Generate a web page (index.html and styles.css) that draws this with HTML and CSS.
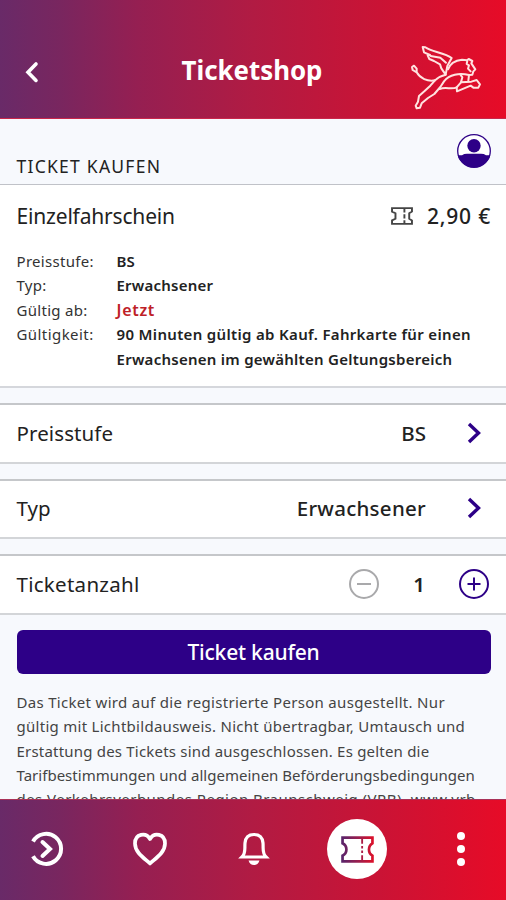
FILE: index.html
```html
<!DOCTYPE html>
<html lang="de">
<head>
<meta charset="utf-8">
<title>Ticketshop</title>
<link rel="stylesheet" href="styles.css">
</head>
<body>
<div class="app">
  <header class="top">
    <svg class="back" viewBox="0 0 16 24"><path d="M12 4 4 12.200l8 8.200" fill="none" stroke="#fff" stroke-width="3.600" stroke-linecap="round"/></svg>
    <h1><span>Ticketshop</span></h1>
    <svg class="lion" viewBox="0 0 300 255" fill="none" stroke="#ffe3e0" stroke-width="6" stroke-linejoin="round" stroke-linecap="round">
      <path d="M137 119 124 100 120 88 102 78 88 72 83 61 90 60 72 52 68 36 76 37C94 51 133 53 155 69L142 93 137 119"/>
      <path d="M92 63 121 68 138 83"/>
      <path d="M144 103C150 86 165 76 186 74L201 76 206 72 217 78 214 85 226 103 220 109 217 119 207 120 205 137"/>
      <path d="M202 77 200 87 207 91 204 101 212 109"/>
      <path d="M137 119C119 123 112 129 105 136C82 140 60 130 50 112L38 105 36 96 42 92 50 101V112"/>
      <path d="M105 136 91 152 73 169 57 183 54 200 47 212 50 220 60 218 65 205 84 189 103 177 121 156 132 139C148 119 177 113 207 120"/>
      <path d="M119 162C138 154 154 165 170 157L171 169 212 152 220 158 235 158 240 148 230 135 214 140 183 142 187 127 181 118"/>
      <path d="M170 157 183 142"/>
    </svg>
  </header>
  <main>
    <div class="subhead">
      <h2>TICKET KAUFEN</h2>
      <svg class="user" viewBox="0 0 36 36"><circle cx="18" cy="18" r="16.300" fill="#fff" stroke="#2d0087" stroke-width="1.300"/><circle cx="18" cy="12.800" r="6.700" fill="#2d0087"/><path d="M1.700 22.200H6Q8 20.800 11 20.800H25Q28 20.800 30 22.200H34.300A17 17 0 0 1 1.700 22.200Z" fill="#2d0087"/></svg>
    </div>
    <section class="ticket">
      <div class="title">
        <span class="name">Einzelfahrschein</span>
        <svg class="mini" viewBox="0 0 32 26" fill="none" stroke="#454545" stroke-width="2.800"><path d="M1.500 1.500H30.500V6.500L26.500 9V17L30.500 19.500V24.500H1.500V19.500L6.500 17V9L1.500 6.500Z"/><path d="M19.500 2V24" stroke-dasharray="6 2.500"/></svg>
        <span class="price">2,90 €</span>
      </div>
      <dl>
        <dt class="d1">Preisstufe:</dt><dd><span class="v1">BS</span></dd>
        <dt class="d2">Typ:</dt><dd><span class="v2">Erwachsener</span></dd>
        <dt class="d3">Gültig ab:</dt><dd class="now"><span class="v3">Jetzt</span></dd>
        <dt class="d4">Gültigkeit:</dt><dd><span class="v4">90 Minuten gültig ab Kauf. Fahrkarte für einen</span><br><span class="v5">Erwachsenen im gewählten Geltungsbereich</span></dd>
      </dl>
    </section>
    <section class="row">
      <span class="label l1">Preisstufe</span><span class="value w1">BS</span>
      <svg class="chev" viewBox="0 0 14 22"><path d="M2 2 11.500 11 2 20" fill="none" stroke="#2d0087" stroke-width="3.400"/></svg>
    </section>
    <section class="row">
      <span class="label l2">Typ</span><span class="value w2">Erwachsener</span>
      <svg class="chev" viewBox="0 0 14 22"><path d="M2 2 11.500 11 2 20" fill="none" stroke="#2d0087" stroke-width="3.400"/></svg>
    </section>
    <section class="row count">
      <span class="label l3">Ticketanzahl</span>
      <svg class="round" viewBox="0 0 32 32" fill="none" stroke="#a9a9ab" stroke-width="2"><circle cx="16" cy="16" r="14"/><path d="M9 16H23"/></svg>
      <span class="num">1</span>
      <svg class="round" viewBox="0 0 32 32" fill="none" stroke="#2d0087" stroke-width="2"><circle cx="16" cy="16" r="14"/><path d="M9.500 16H22.500M16 9.500V22.500"/></svg>
    </section>
    <button><span>Ticket kaufen</span></button>
    <p class="legal"><span class="p1">Das Ticket wird auf die registrierte Person ausgestellt. Nur</span><br><span class="p2">gültig mit Lichtbildausweis. Nicht übertragbar, Umtausch und</span><br><span class="p3">Erstattung des Tickets sind ausgeschlossen. Es gelten die</span><br><span class="p4">Tarifbestimmungen und allgemeinen Beförderungsbedingungen</span><br><span class="p5">des Verkehrsverbundes Region Braunschweig (VRB), www.vrb</span></p>
  </main>
  <nav>
    <svg class="icon" viewBox="0 0 36 36" fill="none" stroke="#fff" stroke-width="4"><path d="M5 10.500A15 15 0 1 1 5 25.200"/><path d="M14.500 11 22 18 14.500 25" stroke-linecap="round"/></svg>
    <svg class="icon" viewBox="0 0 36 36" fill="none" stroke="#fff" stroke-width="3.700" stroke-linejoin="round"><path d="M18 32.500C12 27 3 21.500 3 12.500C3 2.500 14 1 18 8C22 1 33 2.500 33 12.500C33 21.500 24 27 18 32.500Z"/></svg>
    <svg class="icon" viewBox="0 0 36 36" fill="none" stroke="#fff" stroke-width="3.200"><path d="M6 26C10 22 8.500 18 9 12C9.500 6 13 3.500 18 3.500S26.500 6 27 12C27.500 18 26 22 30 26Z"/><path d="M12.500 29.500H23.500Q22 34 18 34T12.500 29.500Z" fill="#fff" stroke="none"/></svg>
    <div class="active">
      <svg class="pass" viewBox="0 0 32 26" fill="none" stroke="url(#tint)" stroke-width="2.600"><defs><linearGradient id="tint" gradientUnits="userSpaceOnUse" x1="0" y1="0" x2="32" y2="0"><stop stop-color="#56246c"/><stop offset=".55" stop-color="#9e1d4c"/><stop offset="1" stop-color="#df1028"/></linearGradient></defs><path d="M1.500 1.500H30.500V7C26 9.500 26 16.500 30.500 19V24.500H1.500V19C6.500 16.500 6.500 9.500 1.500 7Z"/><path d="M20.500 2V7.500M20.500 9.500V12M20.500 14V16.500M20.500 18.500V24" stroke-width="1.800"/></svg>
    </div>
    <svg class="icon" viewBox="0 0 36 36" fill="#fff"><circle cx="18" cy="5" r="4"/><circle cx="18" cy="18" r="4"/><circle cx="18" cy="31" r="4"/></svg>
  </nav>
</div>
</body>
</html>
```
FILE: styles.css
```css
* { box-sizing: border-box; }
body { margin: 0; font-family: "Noto Sans", sans-serif; color: #222; }
.app { width: 506px; height: 900px; display: flex; flex-direction: column; overflow: hidden; background: #f7f9fd; }
.top, nav { flex: none; background: linear-gradient(90deg, #692a68 0%, #79265f 12%, #951f52 27%, #b11b43 50%, #ca1335 75%, #e70b27 100%); }
.top { height: 119px; display: grid; grid-template-columns: 100px 1fr 100px; padding: 25px 6px 0 0; border-bottom: 1px solid #c9274b; }
.back { width: 16px; height: 24px; margin: 35px 0 0 24px; }
h1 { margin: 26px 0 0 4px; text-align: center; color: #fff; font-size: 27.500px; line-height: 38px; font-weight: 700; white-space: nowrap; }
h1 span { display: inline-block; transform: scaleX(.94); }
.lion { width: 100px; height: 85px; margin-top: 10px; }
main { flex: 1; min-height: 0; overflow: hidden; }
.subhead { height: 65px; display: flex; justify-content: space-between; padding: 14px 14px 0 16.500px; }
h2 { margin: 20px 0 0; font-size: 17.500px; line-height: 26px; font-weight: 400; letter-spacing: 1.250px; }
.user { width: 36px; height: 36px; }
.ticket { height: 204px; border-top: 1.500px solid #c0c2c8; border-bottom: 2px solid #d5d7dc; background: #fff; padding: 15px 15px 0 16.500px; }
.title { display: flex; align-items: center; height: 31px; font-size: 21px; white-space: nowrap; }
.name { letter-spacing: -.18px; }
.mini { width: 22px; height: 18px; margin: 0 14px 0 auto; }
.price { font-weight: 500; letter-spacing: .8px; }
dl { display: grid; grid-template-columns: 100px 1fr; margin: 17.500px 0 0; font-size: 15px; line-height: 24.500px; white-space: nowrap; }
dt { color: #333; letter-spacing: .3px; }
.d4 { letter-spacing: .43px; }
dd { margin: 0; font-weight: 600; font-size: 15px; color: #222; }
dd.now { color: #be2026; }
.v2 { letter-spacing: .22px; }
.v3 { font-size: 16px; letter-spacing: .7px; line-height: 1; }
.v4 { letter-spacing: .33px; }
.v5 { letter-spacing: .26px; }
.row { height: 60.500px; margin-top: 15px; border-top: 2px solid #c5c7ca; border-bottom: 2px solid #d3d5d8; background: #fff; display: flex; align-items: center; padding: 0 25px 1px 16.500px; font-size: 20.500px; }
.row + .row { margin-top: 15px; }
.value { margin-left: auto; font-weight: 500; }
.l1 { letter-spacing: .1px; }
.w2 { letter-spacing: .27px; }
.l3 { letter-spacing: .28px; }
.chev { width: 14px; height: 22px; margin-left: 41px; }
.count { padding-right: 16px; }
.round { width: 32px; height: 32px; }
.count .label { margin-right: auto; }
.num { width: 78px; text-align: center; font-weight: 600; }
button { display: block; width: 474px; height: 44px; margin: 15.500px 0 0 16.500px; padding: 0; border: 0; border-radius: 6px; background: #2d0087; color: #fff; font: 500 21px/44px "Noto Sans", sans-serif; letter-spacing: -.2px; }
.legal { margin: 16px 16.500px 0; font-size: 15px; line-height: 24.300px; color: #444; white-space: nowrap; }
.p1 { letter-spacing: .31px; }
.p2 { letter-spacing: .28px; }
.p3 { letter-spacing: .2px; }
.p4 { letter-spacing: .02px; }
.p5 { letter-spacing: .46px; }
nav { height: 101px; border-top: 1px solid #a93258; display: grid; grid-template-columns: repeat(5, 103.600px); justify-content: center; align-items: center; justify-items: center; padding: 0 0 2px 1px; }
.icon { width: 36px; height: 36px; }
.active { width: 60px; height: 60px; border-radius: 50%; background: #fff; display: grid; place-items: center; }
.pass { width: 33px; height: 27px; }
span { white-space: nowrap; }
```
